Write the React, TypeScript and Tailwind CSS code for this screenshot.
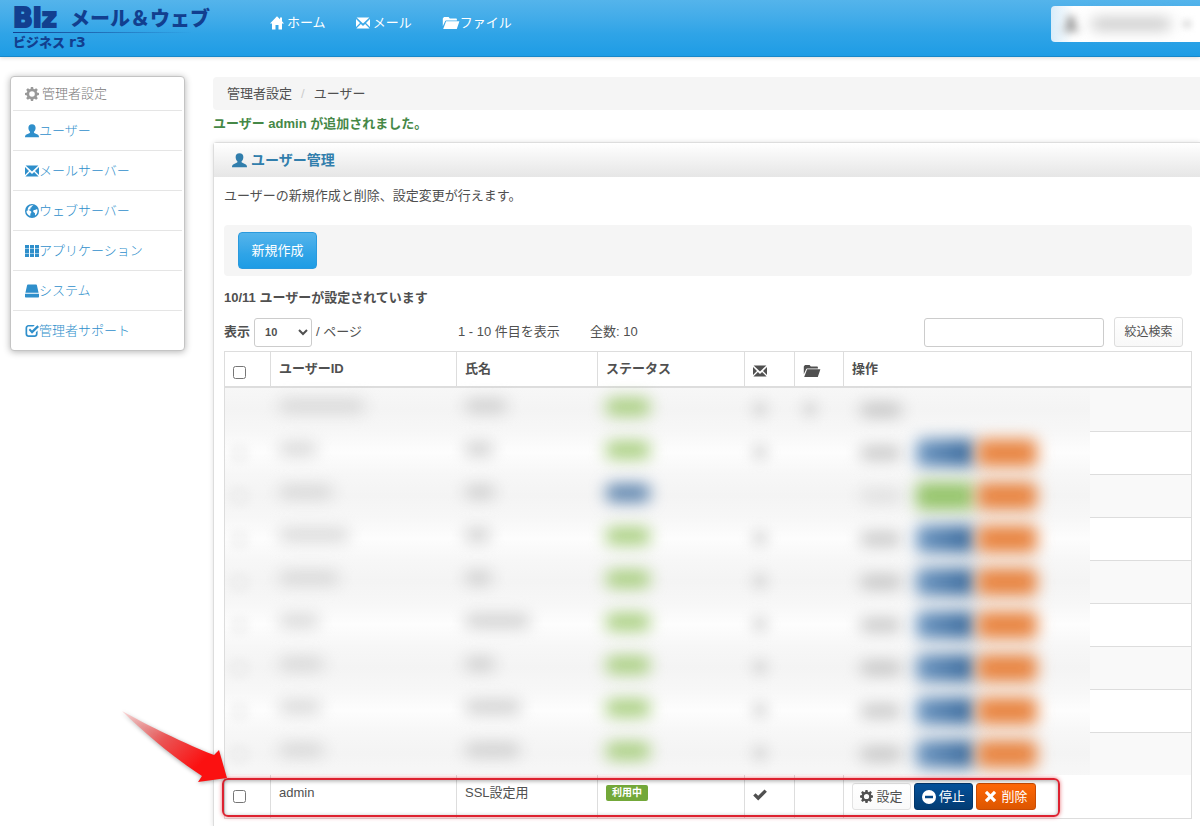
import type { ReactNode } from "react";

const SANS = "font-['Liberation_Sans','Noto_Sans_CJK_JP',sans-serif]";

type IconProps = { className?: string };

function Glyph({ className = "size-[14px]", children }: IconProps & { children: ReactNode }) {
  return (
    <svg viewBox="0 0 14 14" fill="currentColor" aria-hidden="true" className={`shrink-0 ${className}`}>
      {children}
    </svg>
  );
}

const HomeIcon = ({ className }: IconProps) => (
  <Glyph className={className}>
    <path d="M7 .2 10 3.2V1.6h2v3.6L14 7.4H12V13.4H8.5V9H5.5v4.4H2V7.4H0z" />
  </Glyph>
);

const EnvelopeIcon = ({ className }: IconProps) => (
  <Glyph className={className}>
    <path d="M.6 1.400h12.800L7 7.500zM0 3l4 4L0 11zM14 3v8L10 7zM4.900 8 7 9.900 9.100 8l4.500 4.600H.4z" />
  </Glyph>
);

const FolderIcon = ({ className }: IconProps) => (
  <svg viewBox="0 0 18 14" fill="currentColor" aria-hidden="true" className={`shrink-0 ${className ?? "h-[14px] w-[18px]"}`}>
    <path d="M.8 10.2V2.6L2 1h4.6l1.2 1.5h6.1c.6 0 1 .4 1 .9v1H4L3.2 5z" />
    <path d="M4.1 5.3H17.4L14.8 13H1.2z" />
  </svg>
);

const UserIcon = ({ className }: IconProps) => (
  <Glyph className={className}>
    <path d="M7 .2c2.400 0 3.600 1.500 3.600 3.600 0 1.600-.6 3.100-1.600 4-.2.700 0 1.100.7 1.400l2.800 1.200c.9.4 1.500 1 1.500 2.900H0c0-1.900.6-2.500 1.500-2.900l2.800-1.200c.7-.3.9-.7.7-1.400-1-.9-1.600-2.400-1.600-4C3.400 1.700 4.600.2 7 .2z" />
  </Glyph>
);

const GearIcon = ({ className }: IconProps) => (
  <Glyph className={className}>
    <path
      fillRule="evenodd"
      d="M5.900 0h2.200l.4 1.900 1 .4L11.200 1.200l1.600 1.600-1.100 1.700.4 1 1.900.4v2.200l-1.900.4-.4 1 1.100 1.700-1.600 1.600-1.700-1.100-1 .4L8.100 14H5.900l-.4-1.900-1-.4-1.700 1.100-1.600-1.600 1.100-1.700-.4-1L0 8.100V5.900l1.900-.4.4-1L1.200 2.800l1.600-1.600 1.700 1.100 1-.4zM7 4.200a2.800 2.800 0 1 0 0 5.600 2.800 2.800 0 0 0 0-5.600z"
    />
  </Glyph>
);

const GlobeIcon = ({ className }: IconProps) => (
  <Glyph className={className}>
    <path
      fillRule="evenodd"
      d="M7 0a7 7 0 1 1 0 14A7 7 0 0 1 7 0zM8.300 1.500c-1 .1-.9.700-1.700 1 .5.7-.4 1-1.100 1.300-.5.400.3 1-.1 1.500C4.700 5.800 4 5.200 3.600 5.800c.4.9 1.400.8 2.200 1.500.9.7.6 1.500-.1 2-.5.600-.3 1.600-.5 2.600C2.500 10.900 1.400 9 1.500 6.700c.7.3 1 .2 1.300-.5C2.600 5 3 3.500 4.500 2.200 5.700 1.400 7 1.200 8.300 1.500zM12.500 6.500c.1 2-.7 3.700-2.300 4.900-.6-.8.2-1.500-.4-2.300-.6-.6-1.600-.7-1.600-1.800 0-1 .8-1.500 1.700-1.400.900 0 1.500-.5 2.200-.9z"
    />
  </Glyph>
);

const GridIcon = ({ className }: IconProps) => (
  <Glyph className={className}>
    <path d="M0 1h4v3.600H0zM5 1h4v3.600H5zM10 1h4v3.600h-4zM0 5h4v3.900H0zM5 5h4v3.900H5zM10 5h4v3.900h-4zM0 9.400h4V13H0zM5 9.400h4V13H5zM10 9.400h4V13h-4z" />
  </Glyph>
);

const DriveIcon = ({ className }: IconProps) => (
  <Glyph className={className}>
    <path d="M2.900.5h8.200c.4 0 .7.300.8.700L13.600 8.700H.4L2.100 1.200c.1-.4.400-.7.800-.7zM.3 9.700h13.400c.2 0 .3.100.3.300v2.700c0 .400-.3.700-.7.700H.7c-.4 0-.7-.3-.7-.7V10c0-.2.1-.3.300-.3z" />
  </Glyph>
);

const CheckBoxIcon = ({ className }: IconProps) => (
  <Glyph className={className}>
    <path d="M3.500.9h6.300L8.300 2.600H3.700c-.9 0-1.500.6-1.500 1.500v5.700c0 .9.600 1.500 1.500 1.500h5.700c.9 0 1.500-.6 1.500-1.500V8.300l1.700-1.700v3.500c0 1.700-1.300 3-3 3h-6c-1.700 0-3.100-1.300-3.100-3V4c0-1.800 1.300-3.100 3-3.100z" />
    <path d="M3.700 5.900 5 4.600l2 2 5.400-5.300L14 2.900 7 9.800z" />
  </Glyph>
);

const OkIcon = ({ className }: IconProps) => (
  <Glyph className={className}>
    <path d="M.2 7.600 2.600 5.200l2.600 2.600 6.300-6.300 2.400 2.200-8.700 8.800z" />
  </Glyph>
);

const MinusIcon = ({ className }: IconProps) => (
  <Glyph className={className}>
    <path fillRule="evenodd" d="M7 0a7 7 0 1 1 0 14A7 7 0 0 1 7 0zM3 5.700h8v2.600H3z" />
  </Glyph>
);

const RemoveIcon = ({ className }: IconProps) => (
  <Glyph className={className}>
    <path d="M3.300.9 7 4.600 10.700.9l2.400 2.400L9.400 7l3.700 3.700-2.400 2.400L7 9.400l-3.700 3.700L.9 10.700 4.600 7 .9 3.300z" />
  </Glyph>
);

function Header() {
  return (
    <header className="flex h-[57px] items-start border-b border-[#1787c9] bg-linear-to-b from-[#54b4eb] via-[#2fa4e7] via-60% to-[#1d9ce5] shadow-[0_1px_4px_rgba(0,0,0,0.15)]">
      <a href="#top" className="block w-[257px] pl-[13px] pt-1 text-[#123f8f]">
        <span className="flex items-center leading-7">
          <span className="w-[57px] font-['DejaVu_Sans',sans-serif] text-[26px] font-bold [-webkit-text-stroke:2px_#123f8f] [paint-order:stroke_fill]">Biz</span>
          <span className="font-['Noto_Sans_CJK_JP',sans-serif] text-[20px] font-black">メール＆ウェブ</span>
        </span>
        <span className="mb-px block h-px w-[180px] bg-linear-to-r from-[#123f8f] to-transparent" />
        <span className="flex items-center gap-1 leading-4">
          <span className="font-['Noto_Sans_CJK_JP',sans-serif] text-[13px] font-black">ビジネス</span>
          <span className="font-['DejaVu_Sans',sans-serif] text-[14px] font-bold">r3</span>
        </span>
      </a>
      <nav className="flex gap-[30px] pl-[13px] pt-[13px] text-[13px] leading-5 text-white">
        <a href="#home" className="flex items-center gap-[3px]">
          <HomeIcon />
          ホーム
        </a>
        <a href="#mail" className="flex items-center gap-[3px]">
          <EnvelopeIcon />
          メール
        </a>
        <a href="#file" className="flex items-center">
          <FolderIcon />
          ファイル
        </a>
      </nav>
      <button
        type="button"
        aria-label="アカウント"
        className="ml-auto mt-[6px] flex h-9 w-[149px] items-center gap-3 rounded-l bg-linear-to-r from-[#d8ecf9] via-white via-15% to-white pl-3 text-[#888]"
      >
        <UserIcon className="size-4 blur-[4px]" />
        <span className="h-3 w-20 rounded-full bg-[#c8c8c8] blur-[7px]" />
        <span className="h-2 w-2 bg-[#dedede] blur-[3px]" />
      </button>
    </header>
  );
}

const menu = [
  { label: "ユーザー", Icon: UserIcon },
  { label: "メールサーバー", Icon: EnvelopeIcon },
  { label: "ウェブサーバー", Icon: GlobeIcon },
  { label: "アプリケーション", Icon: GridIcon },
  { label: "システム", Icon: DriveIcon },
  { label: "管理者サポート", Icon: CheckBoxIcon },
];

function Sidebar() {
  return (
    <aside className="w-[175px] shrink-0 rounded border border-[#c4c4c4] bg-white px-[2px] shadow-[0_1px_7px_rgba(0,0,0,0.3)]">
      <h2 className="flex h-[33px] items-center gap-[3px] pl-3 text-[13px] font-light text-[#777]">
        <GearIcon className="size-[14px] text-[#999]" />
        管理者設定
      </h2>
      <ul>
        {menu.map(({ label, Icon }) => (
          <li key={label} className="border-t border-[#e5e5e5]">
            <a href="#menu" className="flex h-[39px] items-center pl-3 text-[13px] font-light text-[#2f8fcb]">
              <Icon />
              {label}
            </a>
          </li>
        ))}
      </ul>
    </aside>
  );
}

const hiddenRows = [
  { id: "w-[86px]", name: "w-[42px]", stopped: false, first: true },
  { id: "w-[38px]", name: "w-[28px]", stopped: false, first: false },
  { id: "w-[54px]", name: "w-[30px]", stopped: true, first: false },
  { id: "w-[70px]", name: "w-[25px]", stopped: false, first: false },
  { id: "w-[60px]", name: "w-[27px]", stopped: false, first: false },
  { id: "w-[40px]", name: "w-[65px]", stopped: false, first: false },
  { id: "w-[45px]", name: "w-[30px]", stopped: false, first: false },
  { id: "w-[42px]", name: "w-[56px]", stopped: false, first: false },
  { id: "w-[45px]", name: "w-[55px]", stopped: false, first: false },
];

function HiddenRow({ row, odd }: { row: (typeof hiddenRows)[number]; odd: boolean }) {
  const haze = odd
    ? "bg-linear-to-b from-[#f7f7f7] via-[#f4f4f4] to-[#f7f7f7]"
    : "bg-linear-to-b from-[#f7f7f7] via-[#fdfdfd] to-[#f7f7f7]";
  const cell = `p-2 align-top ${haze}`;
  return (
    <tr className="h-[43px]">
      <td className={`border-l border-[#ddd] ${cell}`}>
        {!row.first && <input type="checkbox" aria-label="選択" className="mt-2 block size-[13px] opacity-50 blur-[4px]" />}
      </td>
      <td className={cell}>
        <span className={`mt-1 block h-3 rounded-full bg-[#d2d2d2] blur-[8px] ${row.id}`} />
      </td>
      <td className={cell}>
        <span className={`mt-1 block h-3 rounded-full bg-[#c8c8c8] blur-[8px] ${row.name}`} />
      </td>
      <td className={cell}>
        <span className={`mt-[2px] block h-[18px] w-[44px] rounded-md blur-[8px] ${row.stopped ? "bg-[#5d84ae]" : "bg-[#a9cf80]"}`} />
      </td>
      <td className={cell}>
        {!row.stopped && <span className="mt-[6px] block size-[14px] rounded-full bg-[#d0d0d0] blur-[7px]" />}
      </td>
      <td className={cell}>
        {row.first && <span className="mt-[6px] block size-[14px] rounded-full bg-[#d0d0d0] blur-[7px]" />}
      </td>
      <td className="border-r border-[#ddd] p-0">
        <div className="flex h-[43px]">
          <div className={`flex w-[246px] items-center gap-[2px] pl-4 ${haze}`}>
            <span className={`mr-[12px] h-3 w-[42px] rounded-full blur-[8px] ${row.stopped ? "bg-[#dcdcdc]" : "bg-[#bdbdbd]"}`} />
            {!row.first && (
              <>
                <button
                  type="button"
                  aria-label={row.stopped ? "再開" : "停止"}
                  className={`h-[28px] w-[59px] rounded-md blur-[8px] ${row.stopped ? "bg-[#96c56c]" : "bg-linear-to-r from-[#6f98c2] to-[#356699]"}`}
                />
                <button type="button" aria-label="削除" className="h-[28px] w-[60px] rounded-md bg-[#e88542] blur-[8px]" />
              </>
            )}
          </div>
          <div className={`flex-1 ${row.first ? "" : "border-t border-[#ddd]"} ${odd ? "bg-[#f9f9f9]" : "bg-white"}`} />
        </div>
      </td>
    </tr>
  );
}

function Callout() {
  return (
    <>
      <div className="pointer-events-none absolute -left-[2px] top-[3px] h-[39px] w-[838px] rounded-md border-2 border-[#dd2230] shadow-[0_0_4px_rgba(220,30,40,0.6),inset_0_1px_4px_rgba(0,0,0,0.35)]" />
      <svg
        viewBox="0 0 110 80"
        aria-hidden="true"
        className="pointer-events-none absolute -left-[104px] -top-[66px] h-[80px] w-[110px] drop-shadow-[0_1px_2px_rgba(0,0,0,0.35)]"
      >
        <defs>
          <linearGradient id="arrow" x1="0" y1="0" x2="1" y2=".7">
            <stop offset="0" stopColor="#f8b4b4" stopOpacity=".5" />
            <stop offset=".45" stopColor="#ea5555" />
            <stop offset=".85" stopColor="#fb1111" />
          </linearGradient>
        </defs>
        <path fill="url(#arrow)" d="M2 2C18 11 56 31 94 46l5-5 8 28-29 4 4-6C56 50 24 24 2 2z" />
      </svg>
    </>
  );
}

function UserTable() {
  const th = "border-r border-[#ddd] px-2 py-[7px] text-left align-top font-bold leading-5";
  const td = "border-r border-[#ddd] p-2 align-top leading-5";
  return (
    <table className="w-full table-fixed border-separate border-spacing-0 text-[13px]">
      <colgroup>
        <col className="w-[47px]" />
        <col className="w-[186px]" />
        <col className="w-[141px]" />
        <col className="w-[147px]" />
        <col className="w-[50px]" />
        <col className="w-[49px]" />
        <col />
      </colgroup>
      <thead>
        <tr className="[&>th]:border-b-2 [&>th]:border-t">
          <th className={`border-l ${th}`}>
            <input type="checkbox" aria-label="すべて選択" className="mt-[7px] block size-[13px]" />
          </th>
          <th className={th}>ユーザーID</th>
          <th className={th}>氏名</th>
          <th className={th}>ステータス</th>
          <th className={th} aria-label="メール">
            <EnvelopeIcon className="mt-[5px] size-[14px]" />
          </th>
          <th className={th} aria-label="ファイル">
            <FolderIcon className="mt-[5px] h-[14px] w-[18px]" />
          </th>
          <th className={th}>操作</th>
        </tr>
      </thead>
      <tbody>
        {hiddenRows.map((row, i) => (
          <HiddenRow key={i} row={row} odd={i % 2 === 0} />
        ))}
        <tr className="relative h-[43px] [&>td]:border-b">
          <td className={`border-l ${td}`}>
            <input type="checkbox" aria-label="admin を選択" className="mt-[7px] block size-[13px]" />
            <Callout />
          </td>
          <td className={td}>admin</td>
          <td className={td}>SSL設定用</td>
          <td className={td}>
            <span className="mt-[2px] block h-4 w-[42px] rounded-xs bg-[#73a839] text-center text-[10px] font-bold leading-4 text-white">利用中</span>
          </td>
          <td className={td}>
            <OkIcon className="mt-[5px] size-[14px]" />
          </td>
          <td className={td} />
          <td className={td}>
            <div className="flex gap-[3px]">
              <button type="button" className="flex h-[27px] w-[59px] items-center justify-center gap-[3px] rounded-[3px] border border-[#e2e2e2] bg-linear-to-b from-white to-[#fafafa]">
                <GearIcon className="size-[13px]" />
                設定
              </button>
              <button type="button" className="flex h-[27px] w-[59px] items-center justify-center gap-[3px] rounded-[3px] border border-[#02366b] bg-linear-to-b from-[#04519b] to-[#033c73] text-white">
                <MinusIcon />
                停止
              </button>
              <button type="button" className="flex h-[27px] w-[60px] items-center justify-center gap-1 rounded-[3px] border border-[#c84b04] bg-linear-to-b from-[#ff6707] to-[#dd5600] text-white">
                <RemoveIcon className="size-[13px]" />
                削除
              </button>
            </div>
          </td>
        </tr>
      </tbody>
    </table>
  );
}

export default function App() {
  return (
    <div className={`min-h-screen overflow-x-hidden bg-white text-[#505050] ${SANS}`}>
      <Header />
      <div className="flex items-start gap-7 pl-[10px] pt-[19px]">
        <Sidebar />
        <main className="min-w-0 flex-1 pt-px text-[13px] leading-5">
          <nav aria-label="breadcrumb" className="flex h-[33px] items-center gap-[9px] rounded-l bg-[#f5f5f5] pl-[14px]">
            <a href="#admin">管理者設定</a>
            <span className="text-[#ccc]">/</span>
            <span>ユーザー</span>
          </nav>
          <p className="pt-1 font-bold text-[#468847]">ユーザー admin が追加されました。</p>
          <section className="mt-2 rounded-tl border-l border-t border-[#ddd] pb-2 shadow-[0_0_5px_rgba(0,0,0,0.12)]">
            <h1 className="flex h-[34px] items-center gap-1 bg-linear-to-b from-white to-[#e6e6e6] pl-[18px] text-[14px] font-bold text-[#317eac]">
              <UserIcon className="size-[15px]" />
              ユーザー管理
            </h1>
            <div className="pl-[10px] pr-2">
              <p className="py-[9px]">ユーザーの新規作成と削除、設定変更が行えます。</p>
              <div className="mt-[10px] rounded bg-[#f5f5f5] px-[14px] py-[7px]">
                <button type="button" className="block h-[37px] w-[79px] rounded border border-[#2a9ade] bg-linear-to-b from-[#54b4eb] via-[#2fa4e7] via-60% to-[#1d9ce5] text-white">
                  新規作成
                </button>
              </div>
              <p className="pt-3 font-bold">10/11 ユーザーが設定されています</p>
              <div className="flex items-center pb-1 pt-[9px]">
                <label htmlFor="per-page" className="font-bold">表示</label>
                <select id="per-page" className="ml-1 h-[29px] w-[58px] rounded-[3px] border border-[#ccc] bg-white pl-[6px] text-[11px] font-bold">
                  <option>10</option>
                </select>
                <span className="w-[146px] pl-1">/ ページ</span>
                <span className="w-[132px]">1 - 10 件目を表示</span>
                <span>全数: 10</span>
                <input type="text" aria-label="検索" className="ml-auto h-[29px] w-[180px] rounded-[3px] border border-[#ccc] px-2" />
                <button type="button" className="ml-[10px] mr-[9px] h-[30px] w-[69px] rounded-[3px] border border-[#ddd] bg-linear-to-b from-white to-[#f8f8f8] text-[12px]">
                  絞込検索
                </button>
              </div>
              <UserTable />
            </div>
          </section>
        </main>
      </div>
    </div>
  );
}
